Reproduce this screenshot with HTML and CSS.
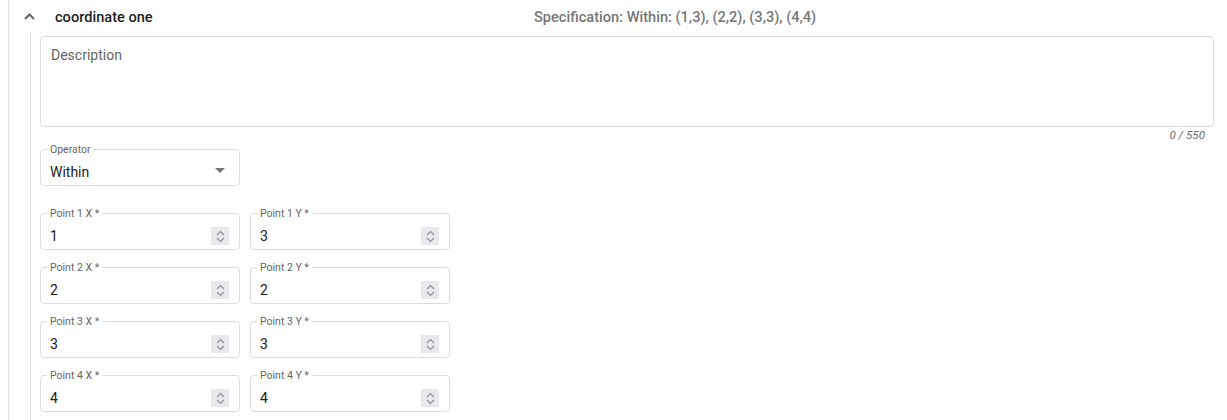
FILE: index.html
```html
<!DOCTYPE html>
<html>
<head>
<meta charset="utf-8">
<link rel="stylesheet" href="styles.css">
</head>
<body>
<div class="panel">
  <div class="header">
    <svg class="chevron" width="11" height="7" viewBox="0 0 11 7"><path d="M1 6 L5.5 1.5 L10 6" fill="none" stroke="#666" stroke-width="2"/></svg>
    <span class="title">coordinate one</span>
    <span class="spec">Specification: Within: (1,3), (2,2), (3,3), (4,4)</span>
  </div>
  <div class="body">
    <div class="textarea">Description</div>
    <div class="counter">0 / 550</div>
    <div class="field select">
      <span class="label">Operator</span>
      <span class="value">Within</span>
      <svg class="caret" width="10" height="5" viewBox="0 0 10 5"><path d="M0 0 L10 0 L5 5 Z" fill="#757575"/></svg>
    </div>
    <div class="points">
      <div class="field"><span class="label">Point 1 X *</span><span class="value">1</span><span class="spin"><svg width="9" height="13" viewBox="0 0 9 13"><path d="M1 5 L4.5 1.5 L8 5 M1 8 L4.5 11.5 L8 8" fill="none" stroke="#8e8e94" stroke-width="1.1"/></svg></span></div>
      <div class="field"><span class="label">Point 1 Y *</span><span class="value">3</span><span class="spin"><svg width="9" height="13" viewBox="0 0 9 13"><path d="M1 5 L4.5 1.5 L8 5 M1 8 L4.5 11.5 L8 8" fill="none" stroke="#8e8e94" stroke-width="1.1"/></svg></span></div>
      <div class="field"><span class="label">Point 2 X *</span><span class="value">2</span><span class="spin"><svg width="9" height="13" viewBox="0 0 9 13"><path d="M1 5 L4.5 1.5 L8 5 M1 8 L4.5 11.5 L8 8" fill="none" stroke="#8e8e94" stroke-width="1.1"/></svg></span></div>
      <div class="field"><span class="label">Point 2 Y *</span><span class="value">2</span><span class="spin"><svg width="9" height="13" viewBox="0 0 9 13"><path d="M1 5 L4.5 1.5 L8 5 M1 8 L4.5 11.5 L8 8" fill="none" stroke="#8e8e94" stroke-width="1.1"/></svg></span></div>
      <div class="field"><span class="label">Point 3 X *</span><span class="value">3</span><span class="spin"><svg width="9" height="13" viewBox="0 0 9 13"><path d="M1 5 L4.5 1.5 L8 5 M1 8 L4.5 11.5 L8 8" fill="none" stroke="#8e8e94" stroke-width="1.1"/></svg></span></div>
      <div class="field"><span class="label">Point 3 Y *</span><span class="value">3</span><span class="spin"><svg width="9" height="13" viewBox="0 0 9 13"><path d="M1 5 L4.5 1.5 L8 5 M1 8 L4.5 11.5 L8 8" fill="none" stroke="#8e8e94" stroke-width="1.1"/></svg></span></div>
      <div class="field"><span class="label">Point 4 X *</span><span class="value">4</span><span class="spin"><svg width="9" height="13" viewBox="0 0 9 13"><path d="M1 5 L4.5 1.5 L8 5 M1 8 L4.5 11.5 L8 8" fill="none" stroke="#8e8e94" stroke-width="1.1"/></svg></span></div>
      <div class="field"><span class="label">Point 4 Y *</span><span class="value">4</span><span class="spin"><svg width="9" height="13" viewBox="0 0 9 13"><path d="M1 5 L4.5 1.5 L8 5 M1 8 L4.5 11.5 L8 8" fill="none" stroke="#8e8e94" stroke-width="1.1"/></svg></span></div>
    </div>
  </div>
</div>
</body>
</html>
```

FILE: styles.css
```css
html, body {
  margin: 0;
  padding: 0;
  background: #fff;
  font-family: Roboto, "Liberation Sans", sans-serif;
  color: #212121;
  overflow: hidden;
}
.panel {
  margin-left: 8px;
  border-left: 1px solid #e3e3e3;
  min-height: 420px;
}
.header {
  display: flex;
  align-items: center;
  height: 33px;
  padding-left: 15px;
}
.chevron {
  display: block;
  margin-top: -1px;
}
.title {
  width: 479px;
  margin-left: 20px;
  font-size: 14.6px;
  font-weight: 500;
  color: #1f1f1f;
}
.spec {
  font-size: 14.6px;
  font-weight: 500;
  color: #777;
}
.body {
  margin-left: 21px;
  border-left: 1px solid #e3e3e3;
  padding: 3px 13px 0 9px;
  min-height: 387px;
}
.textarea {
  border: 1px solid #dcdcdc;
  border-radius: 4px;
  box-sizing: border-box;
  height: 91px;
  padding: 8px 10px;
  font-size: 14px;
  line-height: 20px;
  color: #666;
}
.counter {
  text-align: right;
  padding-right: 9px;
  font-size: 11.6px;
  font-style: italic;
  line-height: 16px;
  color: #6b6b6b;
}
.field {
  position: relative;
  box-sizing: border-box;
  width: 200px;
  height: 37px;
  border: 1px solid #dcdcdc;
  border-radius: 4px;
  display: flex;
  align-items: center;
  padding: 9px 10px 0 9px;
}
.select {
  margin-top: 6px;
}
.label {
  position: absolute;
  left: 6px;
  top: -6px;
  padding: 0 3px;
  background: #fff;
  font-size: 10.5px;
  line-height: 12px;
  color: #666;
}
.value {
  flex: 1;
  font-size: 14px;
  line-height: 20px;
  color: #1a1a1a;
}
.caret {
  display: block;
  margin-right: 4px;
  margin-top: -3px;
}
.points {
  display: grid;
  grid-template-columns: 200px 200px;
  column-gap: 10px;
  row-gap: 17px;
  margin-top: 27px;
}
.spin {
  width: 18px;
  height: 18px;
  background: #e9e9ed;
  display: flex;
  align-items: center;
  justify-content: center;
}
.spin svg {
  display: block;
}
```
